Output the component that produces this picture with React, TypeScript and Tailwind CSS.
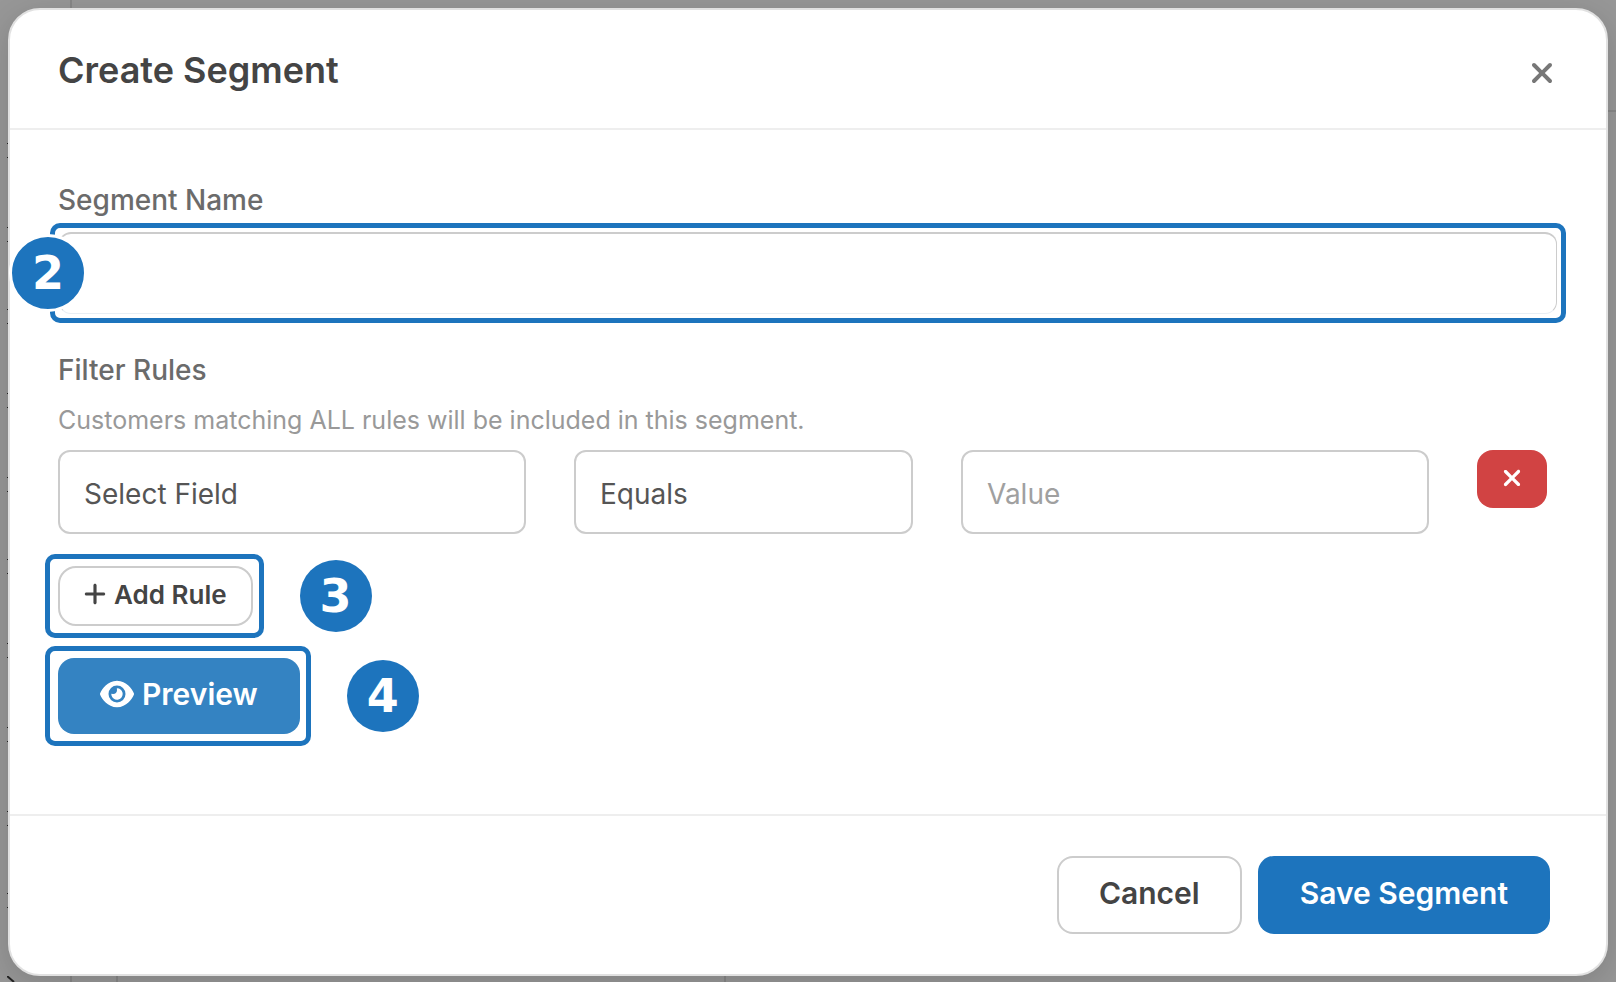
import { FaEye, FaPlus, FaXmark } from 'react-icons/fa6';

const chevronRows = [143, 227, 309, 393, 477, 559, 643, 727, 811, 893];

function Badge({ step, className = '' }: { step: number; className?: string }) {
  return (
    <span
      className={`flex h-[72px] w-[72px] flex-shrink-0 items-center justify-center rounded-full bg-[#1d74bd] font-['DejaVu_Sans'] text-[46px] leading-none font-bold text-white ${className}`}
    >
      {step}
    </span>
  );
}

// Dimmed page that shows around the dialog edges
function Backdrop() {
  return (
    <div aria-hidden="true" className="absolute inset-0 overflow-hidden bg-[#979797]">
      <div className="absolute inset-y-0 left-[70px] w-[2px] bg-[#878787]" />
      <div className="absolute top-[110px] right-0 h-[2px] w-4 bg-[#878787]" />
      <div className="absolute bottom-0 left-[116px] h-4 w-[2px] bg-[#878787]" />
      <div className="absolute bottom-0 left-[724px] h-4 w-[2px] bg-[#878787]" />
      {chevronRows.map((y) => (
        <div key={y} className="absolute left-[7px] h-[15px] w-px border-y border-[#222]" style={{ top: y }} />
      ))}
      <svg className="absolute bottom-0 left-[7px] h-[6px] w-[8px]" viewBox="0 0 8 6" stroke="#222" strokeWidth="2">
        <path d="M0 0l7 6" />
      </svg>
    </div>
  );
}

export default function App() {
  return (
    <div className="relative min-h-screen p-2 pb-1.5 font-['Inter',sans-serif]">
      <Backdrop />
      <div
        role="dialog"
        aria-labelledby="dialog-title"
        className="relative rounded-[32px] border-2 border-[#e1e1e1] bg-white shadow-[0_8px_32px_rgba(0,0,0,0.15)]"
      >
        {/* Header */}
        <header className="flex h-[120px] items-center justify-between border-b-2 border-[#eee] px-12">
          <h2 id="dialog-title" className="pt-0.5 text-[36px] leading-[44px] font-semibold text-[#444]">
            Create Segment
          </h2>
          <button type="button" aria-label="Close" className="pt-2 text-[#777]">
            <FaXmark size={32} />
          </button>
        </header>

        {/* Body */}
        <div className="px-12 pt-[52px] pb-[68px]">
          <label htmlFor="segment-name" className="block text-[28px] leading-[36px] font-medium text-[#6b6b6b]">
            Segment Name
          </label>
          <div className="relative -mx-2 mt-[5px] rounded-[10px] border-[5px] border-[#1d74bd] p-1">
            <input
              id="segment-name"
              type="text"
              className="block h-[82px] w-full rounded-xl border border-t-2 border-[#ccc] border-b-[#e8eef4] px-6 text-[28px] text-[#555] outline-none"
            />
            <Badge step={2} className="absolute top-1.5 -left-[46px] box-content border-[3px] border-white" />
          </div>

          <div className="mt-[29px] text-[28px] leading-[36px] font-medium text-[#6b6b6b]">Filter Rules</div>
          <p className="mt-3.5 text-[25px] leading-[36px] text-[#999]">
            Customers matching ALL rules will be included in this segment.
          </p>

          <div className="mt-3 grid grid-cols-12 items-start gap-12">
            <select
              aria-label="Field"
              className="col-span-4 h-[84px] appearance-none rounded-xl border-2 border-[#ccc] bg-white px-6 pt-1 text-[28px] text-[#555]"
            >
              <option>Select Field</option>
            </select>
            <select
              aria-label="Operator"
              className="col-span-3 h-[84px] appearance-none rounded-xl border-2 border-[#ccc] bg-white px-6 pt-1 text-[28px] text-[#555]"
            >
              <option>Equals</option>
            </select>
            <input
              type="text"
              aria-label="Value"
              placeholder="Value"
              className="col-span-4 h-[84px] min-w-0 rounded-xl border-2 border-[#ccc] px-6 pt-1 text-[28px] text-[#555] placeholder:text-[#a0a0a0]"
            />
            <button
              type="button"
              aria-label="Remove rule"
              className="flex h-[58px] w-[70px] items-center justify-center rounded-2xl bg-[#d14343] pb-0.5 text-white"
            >
              <FaXmark size={26} />
            </button>
          </div>

          <div className="mt-5 -ml-[13px] flex items-center gap-9">
            <div className="rounded-[10px] border-[5px] border-[#1d74bd] py-[7px] pr-1.5 pl-2">
              <button
                type="button"
                className="flex h-[60px] items-center gap-2 rounded-[18px] border-2 border-[#ccc] px-6 pb-1 text-[26px] font-semibold text-[#444]"
              >
                <FaPlus className="h-[26px] w-[22px]" />
                Add Rule
              </button>
            </div>
            <Badge step={3} />
          </div>

          <div className="mt-2 -ml-[13px] flex items-center gap-9">
            <div className="rounded-[10px] border-[5px] border-[#1d74bd] py-[7px] pr-1.5 pl-2">
              <button
                type="button"
                className="flex h-[76px] items-center gap-2 rounded-2xl bg-[#3483c2] px-[42px] pb-1 text-[30px] font-semibold text-white"
              >
                <FaEye size={34} />
                Preview
              </button>
            </div>
            <Badge step={4} />
          </div>
        </div>

        {/* Footer */}
        <footer className="flex justify-end gap-4 border-t-2 border-[#eee] px-14 py-10">
          <button
            type="button"
            className="h-[78px] rounded-2xl border-2 border-[#ccc] px-10 pb-1 text-[30px] font-semibold text-[#444]"
          >
            Cancel
          </button>
          <button
            type="button"
            className="h-[78px] rounded-2xl bg-[#1d74bd] px-[42px] pb-1 text-[30px] font-semibold text-white"
          >
            Save Segment
          </button>
        </footer>
      </div>
    </div>
  );
}
